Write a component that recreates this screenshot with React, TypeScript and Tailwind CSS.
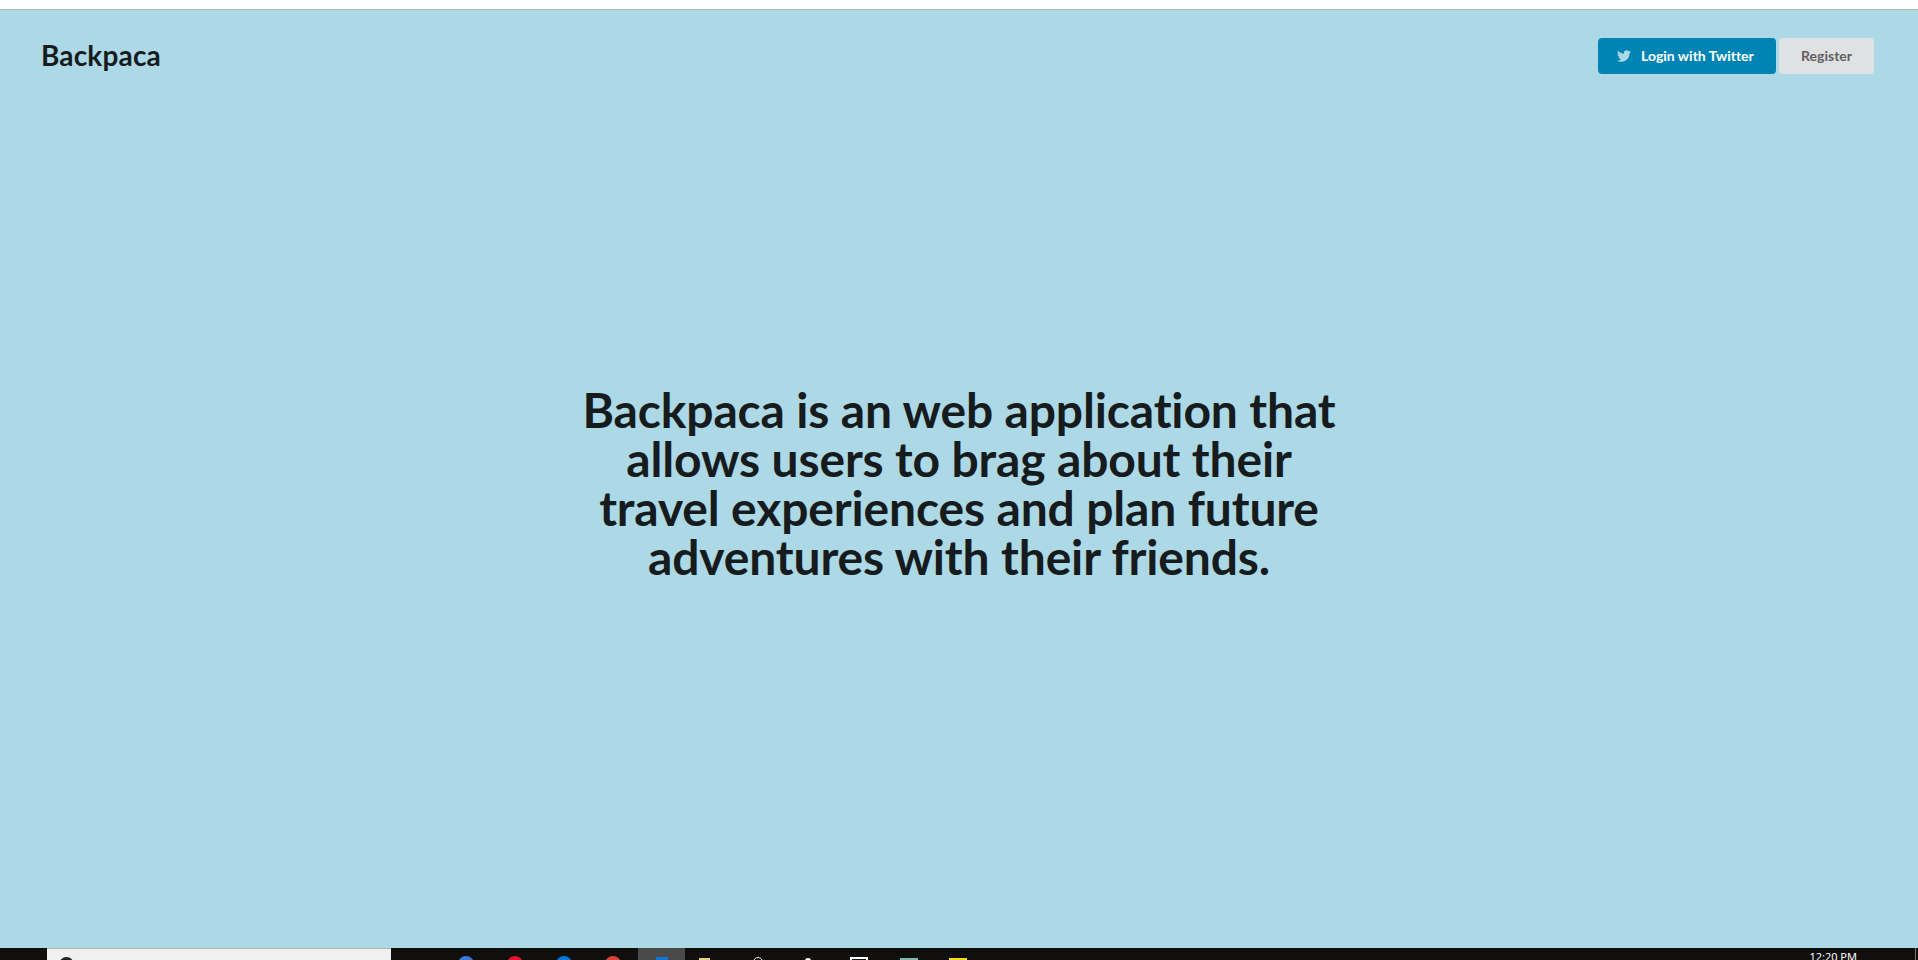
import { FaTwitter } from "react-icons/fa";

function Bump({ className }: { className: string }) {
  return <div className={"mt-[8px] h-[16px] w-[16px] rounded-full " + className} />;
}

function Taskbar() {
  return (
    <div className="flex h-[12px] items-start overflow-hidden bg-[#110f0d]">
      <div className="ml-[47px] h-[12px] w-[344px] border-t border-[#b5b5b5] bg-[#f0f0f0] pl-[12px]">
        <div className="mt-[8px] h-[15px] w-[15px] rounded-full border-[3px] border-[#222222]" />
      </div>
      <div className="ml-[67px] flex gap-[33px]">
        <Bump className="bg-[#3b78d8]" />
        <Bump className="bg-[#e0142d]" />
        <Bump className="bg-[#0a78d4]" />
        <Bump className="bg-[#d9443a]" />
      </div>
      <div className="ml-[17px] flex h-[12px] w-[47px] justify-center bg-[#4a4a4a]">
        <div className="mt-[9px] h-[10px] w-[12px] bg-[#0a78d4]" />
      </div>
      <div className="ml-[14px] mt-[10px] h-[4px] w-[11px] bg-[#e8cf7a]" />
      <div className="ml-[43px] mt-[9px] h-[10px] w-[10px] rounded-full border border-[#dddddd]" />
      <div className="ml-[42px] mt-[10px] h-[8px] w-[6px] rounded-full bg-white" />
      <div className="ml-[39px] mt-[9px] h-[12px] w-[18px] border-2 border-white" />
      <div className="ml-[32px] mt-[10px] h-[6px] w-[18px] bg-[#7fb8b0]" />
      <div className="ml-[31px] mt-[10px] h-[6px] w-[18px] bg-[#f2dc1d]" />
      <div className="ml-auto mr-[58px] mt-[1px] font-['Noto_Sans',sans-serif] text-[11px] leading-[16px] text-white">
        12:20 PM
      </div>
      <div className="mr-[2px] h-[12px] w-px bg-[#777777]" />
    </div>
  );
}

export default function App() {
  return (
    <div className="flex h-[960px] flex-col overflow-hidden bg-white font-['Lato',sans-serif] [font-variant-ligatures:none]">
      <div className="h-[10px] border-b border-[#b8b8b8] bg-white" />
      <div className="flex flex-1 flex-col bg-[#add8e6]">
        <nav className="flex items-center justify-between pl-[41px] pr-[44px] pt-[28px]">
          <a className="mt-[-2px] text-[28px] font-bold leading-[36px] tracking-[0.15px] text-[#161c1e]">Backpaca</a>
          <div className="flex gap-[3px]">
            <button className="flex h-[36px] w-[178px] items-center rounded-[4px] bg-[#0084b4] pb-[1px] pl-[19px] text-[14px] font-bold text-white">
              <FaTwitter className="mr-[10px] text-[14px] text-[#add8e6]" />
              Login with Twitter
            </button>
            <button className="h-[36px] w-[95px] rounded-[4px] bg-[#e0e1e2] pb-[1px] text-[14px] font-bold text-[#5f5f60]">
              Register
            </button>
          </div>
        </nav>
        <div className="flex flex-1 items-center justify-center pb-[56px]">
          <h1 className="w-[800px] text-center text-[48px] font-bold leading-[49px] tracking-[-0.15px] text-[#161c1e]">
            Backpaca is an web application that
            <br />
            allows users to brag about their
            <br />
            travel experiences and plan future
            <br />
            adventures with their friends.
          </h1>
        </div>
      </div>
      <Taskbar />
    </div>
  );
}
